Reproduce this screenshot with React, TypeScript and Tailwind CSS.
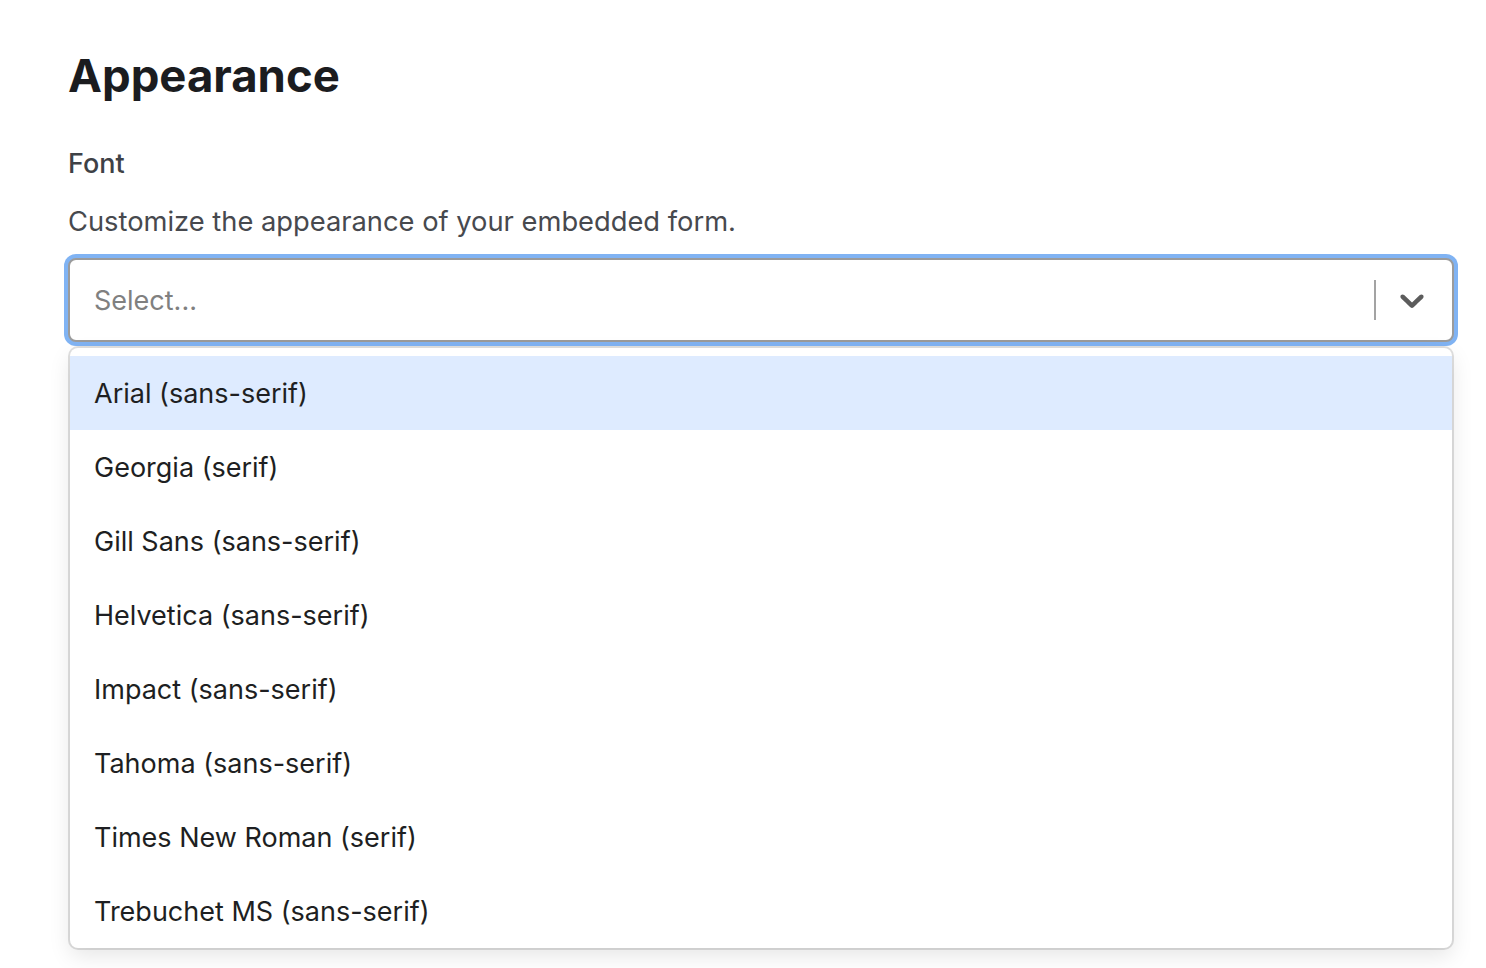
import React from 'react';

const fonts = [
  'Arial (sans-serif)',
  'Georgia (serif)',
  'Gill Sans (sans-serif)',
  'Helvetica (sans-serif)',
  'Impact (sans-serif)',
  'Tahoma (sans-serif)',
  'Times New Roman (serif)',
  'Trebuchet MS (sans-serif)',
];

function Chevron() {
  return (
    <svg viewBox="0 0 20 20" className="w-10 h-10 fill-[#5c5c5c]" aria-hidden="true">
      <path d="M4.516 7.548c0.436-0.446 1.043-0.481 1.576 0l3.908 3.747 3.908-3.747c0.533-0.481 1.141-0.446 1.574 0 0.436 0.445 0.408 1.197 0 1.615-0.406 0.418-4.695 4.502-4.695 4.502-0.217 0.223-0.502 0.335-0.787 0.335s-0.57-0.112-0.789-0.335c0 0-4.287-4.084-4.695-4.502s-0.436-1.17 0-1.615z" />
    </svg>
  );
}

export default function App() {
  return (
    <div className="min-h-screen bg-white pl-[68px] pr-[32px] pt-[48px] font-['Inter',sans-serif]">
      <h1 className="text-[45.5px] leading-[56px] font-bold text-[#1b1c1f]">Appearance</h1>

      <div className="mt-[44px] text-[27px] leading-[32px] font-medium text-[#3e4146]">Font</div>
      <p className="mt-[26px] text-[27.3px] leading-[32px] text-[#47494e]">
        Customize the appearance of your embedded form.
      </p>

      <div className="mt-[20px] relative">
        <div className="h-[84px] flex items-center rounded-[8px] border-2 border-[#9b9b9b] bg-white shadow-[0_0_0_4px_#80b3f3]">
          <div className="flex-1 pl-[24px] pt-[2px] text-[27px] text-[#808080]">Select...</div>
          <div className="flex items-center">
            <span className="w-[2px] h-[40px] bg-[#a3a3a3]" />
            <span className="pl-4 pr-5 flex items-center">
              <Chevron />
            </span>
          </div>
        </div>

        <div className="mt-[6px] mx-[2px] h-[600px] overflow-hidden rounded-[8px] bg-white shadow-[0_0_0_2px_rgba(0,0,0,0.12),0_8px_22px_rgba(0,0,0,0.1)]">
          <ul className="pt-2">
            {fonts.map((f, i) => (
              <li
                key={f}
                className={
                  'h-[74px] flex items-center px-6 pt-[2px] text-[27px] text-[#1e1f22] ' +
                  (i === 0 ? 'bg-[#deebff]' : '')
                }
              >
                {f}
              </li>
            ))}
          </ul>
        </div>
      </div>
    </div>
  );
}
